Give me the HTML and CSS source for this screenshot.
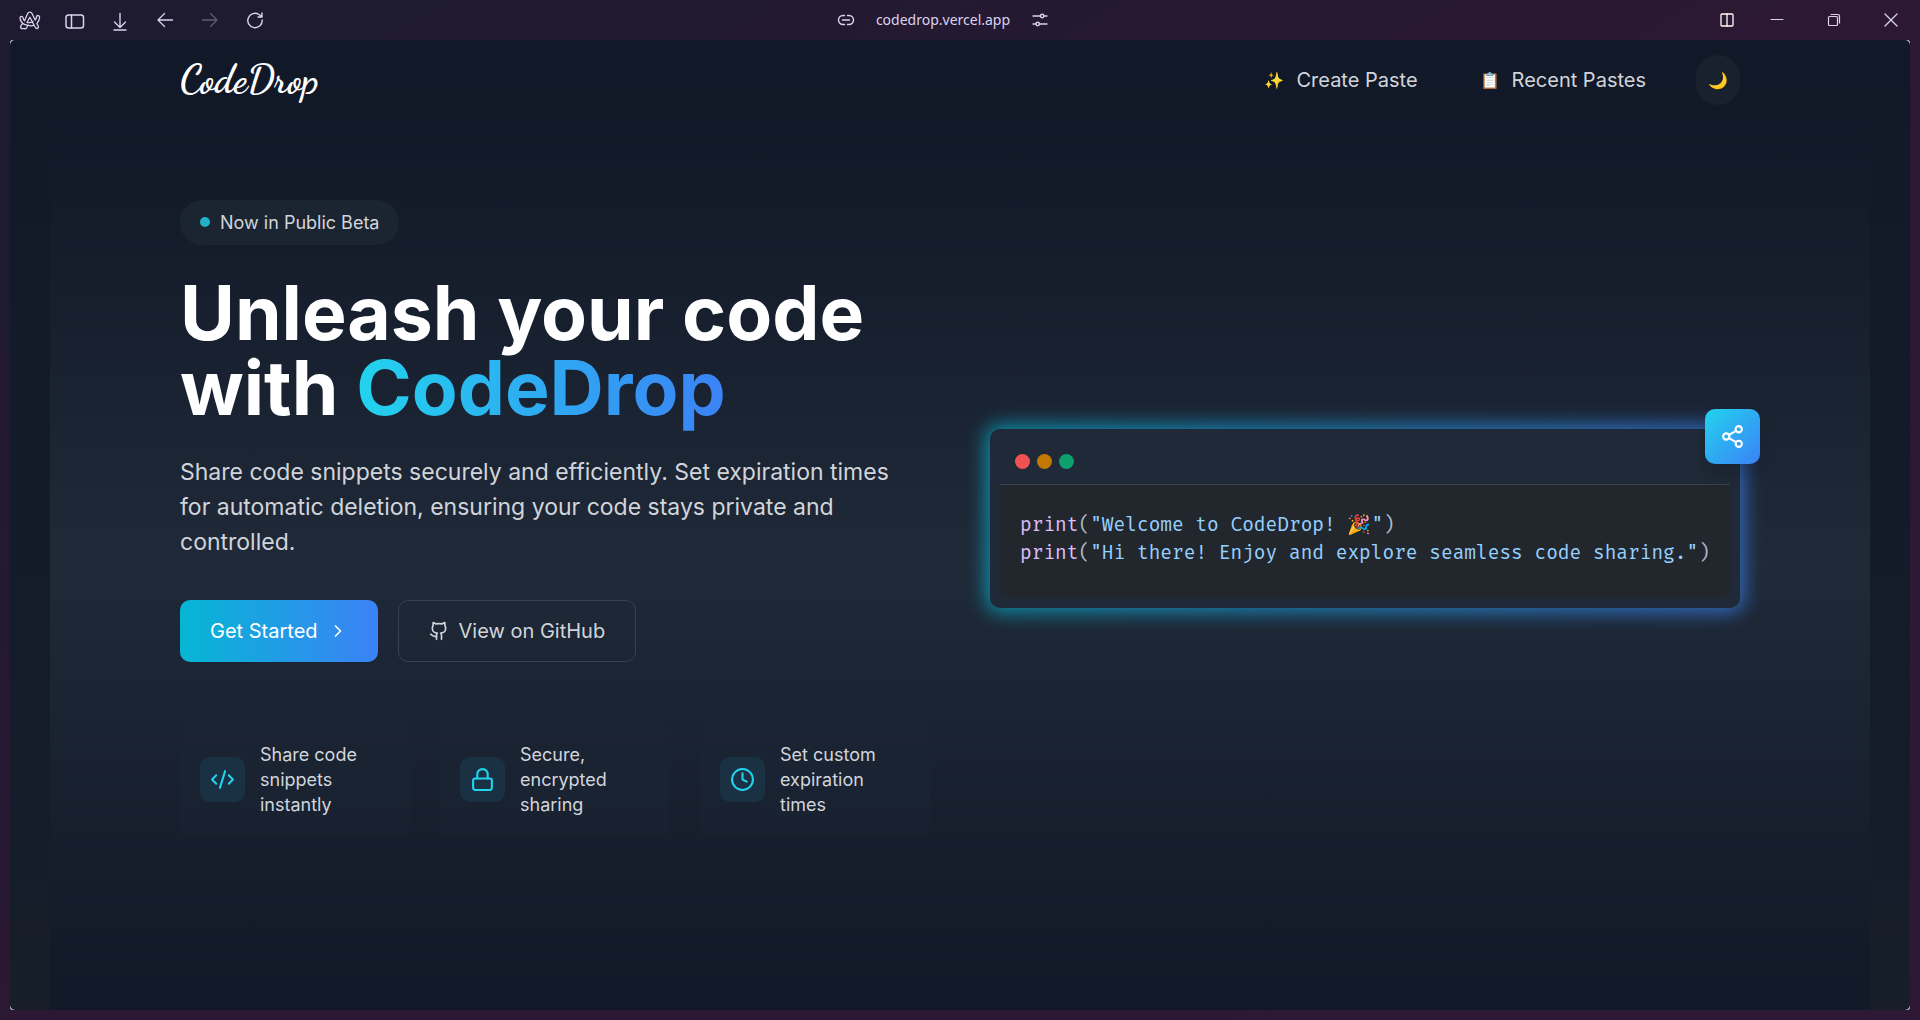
FILE: index.html
```html
<!DOCTYPE html>
<html lang="en">
<head>
<meta charset="utf-8">
<meta name="viewport" content="width=device-width, initial-scale=1">
<title>CodeDrop</title>
<link rel="stylesheet" href="styles.css">
</head>
<body>
<div class="browser">
  <div class="toolbar">
    <div class="tools">
      <button class="tool" aria-label="Browser menu"><svg width="22" height="20" viewBox="0 0 22 20" stroke-width="1.3"><path d="M4.500 18.500C2 19.300.800 17.300 2 15.600l1.600-2.300C1.800 11.600.900 9.800 1 7.800c.2-1.800 2.700-1.900 3 0 .2 1.200.7 2.200 1.500 3L8.700 3.500c.8-1.900 3.400-1.900 4.300 0l3.200 6.500c.7-.8 1.100-1.900 1.300-3.200.3-1.900 3.300-1.600 3.100.5-.2 2.500-1.100 4.600-2.700 6.200l1.400 2.800c.8 1.900-1.800 3.200-2.900 1.200l-1.300-2.300c-1.900.8-4.200.8-6.200 0l-1.300 2.600c-.6.900-1.700 1.200-3.100.7zM3.600 13.300c1.500 1.300 3.200 2 5.300 1.900M8 12.500l2.900-5.300 4.200 8M8 12.500c2 .4 4.200.1 6-1"/></svg></button>
      <button class="tool" aria-label="Toggle sidebar"><svg width="20" height="20" viewBox="0 0 20 20" stroke-width="1.500"><rect x="1" y="5" width="17.500" height="13" rx="2.500"/><path d="M6.500 5v13"/></svg></button>
      <button class="tool" aria-label="Downloads"><svg width="20" height="20" viewBox="0 0 20 20" stroke-width="1.400"><path d="M10 3.500v14M4.500 12l5.500 5.500 5.500-5.500M4 20h12"/></svg></button>
      <button class="tool" aria-label="Back"><svg width="20" height="20" viewBox="0 0 20 20" stroke-width="1.300"><path d="M17.500 10H3M9.500 3.500L3 10l6.500 6.500"/></svg></button>
      <button class="tool" aria-label="Forward" disabled><svg width="20" height="20" viewBox="0 0 20 20" stroke-width="1.300"><path d="M2.500 10H17M10.500 3.500L17 10l-6.500 6.500"/></svg></button>
      <button class="tool" aria-label="Reload"><svg width="20" height="20" viewBox="0 0 20 20" stroke-width="1.400"><path d="M17.200 10A7.200 7.200 0 1 1 14 4.500l2.500 2M17 3v4h-4"/></svg></button>
    </div>
    <div class="address">
      <svg width="16" height="16" viewBox="0 0 16 16" stroke-width="1.400"><path d="M6.500 3.500H5a4.500 4.500 0 0 0 0 9h1.500M9.500 3.500H11a4.500 4.500 0 0 1 0 9H9.500M4.500 8h7"/></svg>
      <span>codedrop.vercel.app</span>
      <svg width="16" height="16" viewBox="0 0 16 16" stroke-width="1.400"><path d="M1 4h7.500M12 4h3M1 12h3M7.500 12H15"/><circle cx="10.200" cy="4" r="1.700"/><circle cx="5.700" cy="12" r="1.700"/></svg>
    </div>
    <div class="window-tools">
      <button class="tool split" aria-label="Split view"><svg width="16" height="16" viewBox="0 0 16 16" stroke-width="1.300"><rect x="2" y="2" width="12" height="12" rx="1"/><path d="M8 2v12"/></svg></button>
      <button class="tool" aria-label="Minimize"><svg width="16" height="16" viewBox="0 0 16 16" stroke-width="1"><path d="M2 7.500h12"/></svg></button>
      <button class="tool" aria-label="Restore"><svg width="16" height="16" viewBox="0 0 16 16" stroke-width="1.200"><rect x="2.500" y="4.500" width="9" height="9" rx="1"/><path d="M5 2.500h7a1.500 1.500 0 0 1 1.500 1.500v7"/></svg></button>
      <button class="tool" aria-label="Close"><svg width="16" height="16" viewBox="0 0 16 16" stroke-width="1.300"><path d="M2 2l12 12M14 2L2 14"/></svg></button>
    </div>
  </div>

  <div class="viewport">
  <div class="page">
    <header class="site-header">
      <a class="brand" href="#">CodeDrop</a>
      <nav class="nav">
        <a href="#"><span class="emoji">✨</span>Create Paste</a>
        <a href="#"><span class="emoji">📋</span>Recent Pastes</a>
        <button class="theme" aria-label="Toggle theme">🌙</button>
      </nav>
    </header>

    <main class="hero">
      <section class="intro">
        <p class="beta"><span class="beta-dot"></span>Now in Public Beta</p>
        <h1>Unleash your code<br>with <span class="gradient-text">CodeDrop</span></h1>
        <p class="lead">Share code snippets securely and efficiently. Set expiration times for automatic deletion, ensuring your code stays private and controlled.</p>
        <div class="actions">
          <a class="btn primary" href="#">Get Started <svg width="20" height="20" viewBox="0 0 24 24" stroke-width="2"><path d="M9 18l6-6-6-6"/></svg></a>
          <a class="btn outline" href="#"><svg width="20" height="20" viewBox="0 0 24 24" stroke-width="2"><path d="M15 22v-4a4.800 4.800 0 0 0-1-3.500c3 0 6-2 6-5.500.08-1.250-.27-2.480-1-3.500.28-1.150.28-2.350 0-3.500 0 0-1 0-3 1.500-2.640-.5-5.360-.5-8 0C6 2 5 2 5 2c-.3 1.150-.3 2.350 0 3.500A5.400 5.400 0 0 0 4 9c0 3.500 3 5.500 6 5.500-.39.490-.68 1.050-.85 1.650S8.930 17.380 9 18v4"/><path d="M9 18c-4.510 2-5-2-7-2"/></svg>View on GitHub</a>
        </div>
        <ul class="features">
          <li><span class="feature-icon"><svg width="25" height="25" viewBox="0 0 24 24" stroke-width="2"><path d="M18 16l4-4-4-4M6 8l-4 4 4 4M14.500 4l-5 16"/></svg></span>Share code snippets instantly</li>
          <li><span class="feature-icon"><svg width="25" height="25" viewBox="0 0 24 24" stroke-width="2"><rect x="3" y="11" width="18" height="11" rx="2"/><path d="M7 11V7a5 5 0 0 1 10 0v4"/></svg></span>Secure, encrypted sharing</li>
          <li><span class="feature-icon"><svg width="25" height="25" viewBox="0 0 24 24" stroke-width="2"><circle cx="12" cy="12" r="10"/><path d="M12 6v6l4 2"/></svg></span>Set custom expiration times</li>
        </ul>
      </section>

      <section class="demo" aria-label="Code sample">
        <div class="editor">
          <div class="editor-bar"><span class="dot red"></span><span class="dot amber"></span><span class="dot green"></span></div>
          <pre class="code"><code><span class="fn">print</span>(<span class="str">"Welcome to CodeDrop! <span class="party">🎉</span>"</span>)
<span class="fn">print</span>(<span class="str">"Hi there! Enjoy and explore seamless code sharing."</span>)</code></pre>
        </div>
        <button class="share" aria-label="Share"><svg width="25" height="25" viewBox="0 0 24 24" stroke-width="2"><circle cx="18" cy="5" r="3"/><circle cx="6" cy="12" r="3"/><circle cx="18" cy="19" r="3"/><path d="M8.590 13.510l6.830 3.980M15.410 6.510l-6.820 3.980"/></svg></button>
      </section>
    </main>
  </div>
  </div>
</div>
</body>
</html>
```
FILE: styles.css
```css
*, *::before, *::after { box-sizing: border-box; }

body {
  margin: 0;
  font-family: Inter, "Liberation Sans", sans-serif;
  color: #d1d5db;
  background: #1e1a30;
}

a { color: inherit; text-decoration: none; }
button { padding: 0; border: 0; background: none; color: inherit; font: inherit; }
h1, p, ul, pre { margin: 0; }
svg { display: block; flex: none; overflow: visible; fill: none; stroke: currentColor; stroke-linecap: round; stroke-linejoin: round; }

.browser {
  display: flex;
  flex-direction: column;
  min-height: 100vh;
  padding: 0 10px 10px;
  background: linear-gradient(150deg, #1e1a30 10%, #2c1832 50%, #2e1836);
}

.toolbar {
  display: grid;
  grid-template-columns: 1fr auto 1fr;
  align-items: center;
  height: 40px;
  color: #dcd2f0;
}
.tools { display: flex; gap: 25px; padding-left: 10px; }
.tool { display: flex; align-items: center; justify-content: center; width: 20px; height: 20px; }
.tool:disabled { opacity: .35; }
.address {
  display: flex;
  align-items: center;
  gap: 22px;
  padding-right: 34px;
  font: 14px/20px "Noto Sans", sans-serif;
}
.window-tools { display: flex; justify-content: flex-end; gap: 37px; padding-right: 9px; }
.split { margin-right: -7px; color: #fff; }

.viewport {
  flex: 1;
  display: flex;
  border-radius: 3px;
  background: #e5e7eb;
}
.page {
  flex: 1;
  display: flex;
  flex-direction: column;
  min-width: 0;
  padding: 0 40px;
  border-radius: 5px;
  background: linear-gradient(#111827, #171e2a);
}

.site-header {
  display: flex;
  align-items: center;
  justify-content: space-between;
  height: 80px;
  padding: 0 130px;
}
.brand {
  color: #fff;
  font: 700 39px/50px "Dancing Script", cursive;
}
.nav { display: flex; align-items: center; font-size: 20px; line-height: 28px; }
.nav a { display: flex; align-items: center; gap: 12px; margin-right: 62px; }
.nav a:nth-of-type(2) { margin-right: 50px; }
.emoji { font-size: 16px; }
.theme { width: 44px; height: 50px; border-radius: 22px; background: #19212e; font-size: 16px; }

.hero {
  flex: 1;
  display: grid;
  grid-template-columns: 1fr 1fr;
  gap: 60px;
  align-items: center;
  padding: 0 130px 94px;
  background: linear-gradient(#111827, #1f2937 50%, #111827);
}

.beta {
  display: inline-flex;
  align-items: center;
  gap: 10px;
  padding: 10px 20px;
  border-radius: 22px;
  background: #1b2431;
  font-size: 18px;
  line-height: 25px;
}
.beta-dot { width: 10px; height: 10px; border-radius: 50%; background: #22b1c9; }

h1 {
  margin-top: 30px;
  color: #fff;
  font-size: 75px;
  font-weight: 700;
  line-height: 75px;
}
.gradient-text {
  background: linear-gradient(to right, #22d3ee, #3b82f6);
  -webkit-background-clip: text;
  background-clip: text;
  color: transparent;
}

.lead { max-width: 712px; margin-top: 30px; font-size: 23px; line-height: 35px; }

.actions { display: flex; gap: 20px; margin-top: 40px; }
.btn {
  display: flex;
  align-items: center;
  gap: 10px;
  height: 62px;
  padding: 0 30px;
  border-radius: 10px;
  font-size: 20px;
  line-height: 28px;
}
.primary { background: linear-gradient(to right, #06b6d4, #3b82f6); color: #fff; }
.outline { border: 1px solid #374151; }

.features {
  display: grid;
  grid-template-columns: repeat(3, 1fr);
  gap: 30px;
  margin-top: 60px;
  padding: 0;
  list-style: none;
  font-size: 18px;
  line-height: 25px;
}
.features li {
  display: flex;
  align-items: center;
  gap: 15px;
  padding: 20px;
  border-radius: 10px;
  background: rgb(31 41 55 / 30%);
}
.feature-icon {
  display: flex;
  flex: none;
  align-items: center;
  justify-content: center;
  width: 45px;
  height: 45px;
  border-radius: 10px;
  background: #193142;
  color: #22d3ee;
}

.demo { position: relative; min-width: 0; isolation: isolate; }
.demo::before {
  content: "";
  position: absolute;
  inset: -4px;
  z-index: -1;
  border-radius: 14px;
  background: linear-gradient(to right, #06b6d4, #3b82f6);
  filter: blur(10px);
  opacity: .75;
}
.editor { padding: 10px; border-radius: 10px; background: #1f2937; }
.editor-bar {
  display: flex;
  gap: 7px;
  padding: 15px;
  border-bottom: 1px solid #374151;
}
.dot { width: 15px; height: 15px; border-radius: 50%; }
.red { background: #f05252; }
.amber { background: #c27803; }
.green { background: #0e9f6e; }
.code {
  padding: 26px 20px 31px;
  border-radius: 0 0 10px 10px;
  background: #22272e;
  color: #adbac7;
  font: 19px/28px "Fira Code", "DejaVu Sans Mono", monospace;
}
.code code { font: inherit; }
.fn { color: #dcbdfb; }
.str { color: #96d0ff; }
.party { font-size: 19px; line-height: 1; }
.share {
  position: absolute;
  top: -20px;
  right: -20px;
  display: flex;
  align-items: center;
  justify-content: center;
  width: 55px;
  height: 55px;
  border-radius: 10px;
  background: linear-gradient(to bottom right, #22d3ee, #3b82f6);
  box-shadow: 0 10px 15px rgb(0 0 0 / 15%);
  color: #fff;
}
```
